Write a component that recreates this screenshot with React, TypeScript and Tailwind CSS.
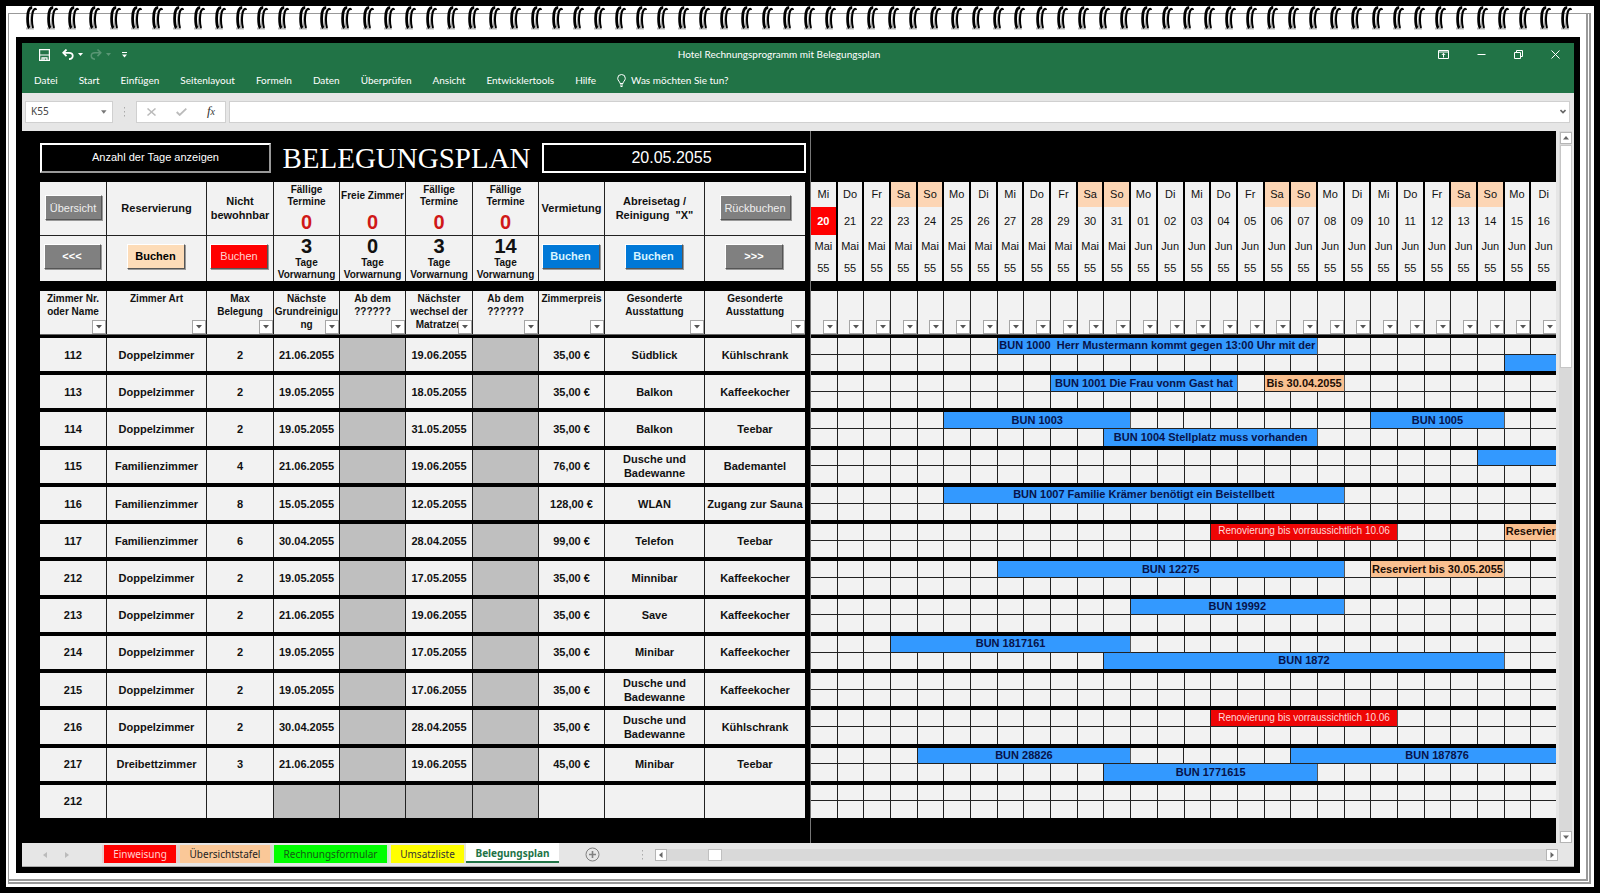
import React from "react";

const RINGS = Array.from({ length: 74 }, (_, i) => i);
const LEFT_COLS =
  "grid grid-cols-[minmax(0,67fr)_minmax(0,100fr)_minmax(0,67fr)_minmax(0,66fr)_minmax(0,66fr)_minmax(0,67fr)_minmax(0,66fr)_minmax(0,66fr)_minmax(0,100fr)_minmax(0,100fr)]";
const CAL_COLS = "grid grid-cols-[repeat(28,minmax(0,1fr))]";

const MENU = ["Datei", "Start", "Einfügen", "Seitenlayout", "Formeln", "Daten", "Überprüfen", "Ansicht", "Entwicklertools", "Hilfe"];

const WEEKDAYS = ["Mi", "Do", "Fr", "Sa", "So", "Mo", "Di"];

const DAYS = Array.from({ length: 28 }, (_, i) => {
  const inMay = i < 12;
  return {
    weekday: WEEKDAYS[i % 7],
    day: String(inMay ? 20 + i : i - 11).padStart(2, "0"),
    month: inMay ? "Mai" : "Jun",
    weekend: i % 7 === 3 || i % 7 === 4,
  };
});

type Kind = "blue" | "red" | "peach";
type Booking = { start: number; span: number; text: string; kind: Kind };
type Room = {
  nr: string;
  art: string;
  max: string;
  cleaning: string;
  mattress: string;
  price: string;
  extra1: string;
  extra2: string;
  top: Booking[];
  bottom: Booking[];
};

const b = (start: number, span: number, text: string, kind: Kind = "blue"): Booking => ({ start, span, text, kind });

const ROOMS: Room[] = [
  { nr: "112", art: "Doppelzimmer", max: "2", cleaning: "21.06.2055", mattress: "19.06.2055", price: "35,00 €", extra1: "Südblick", extra2: "Kühlschrank", top: [b(7, 12, "BUN 1000  Herr Mustermann kommt gegen 13:00 Uhr mit der")], bottom: [b(26, 2, "")] },
  { nr: "113", art: "Doppelzimmer", max: "2", cleaning: "19.05.2055", mattress: "18.05.2055", price: "35,00 €", extra1: "Balkon", extra2: "Kaffeekocher", top: [b(9, 7, "BUN 1001 Die Frau vonm Gast hat"), b(17, 3, "Bis 30.04.2055", "peach")], bottom: [] },
  { nr: "114", art: "Doppelzimmer", max: "2", cleaning: "19.05.2055", mattress: "31.05.2055", price: "35,00 €", extra1: "Balkon", extra2: "Teebar", top: [b(5, 7, "BUN 1003"), b(21, 5, "BUN 1005")], bottom: [b(11, 8, "BUN 1004 Stellplatz muss vorhanden")] },
  { nr: "115", art: "Familienzimmer", max: "4", cleaning: "21.06.2055", mattress: "19.06.2055", price: "76,00 €", extra1: "Dusche und Badewanne", extra2: "Bademantel", top: [b(25, 3, "")], bottom: [] },
  { nr: "116", art: "Familienzimmer", max: "8", cleaning: "15.05.2055", mattress: "12.05.2055", price: "128,00 €", extra1: "WLAN", extra2: "Zugang zur Sauna", top: [b(5, 15, "BUN 1007 Familie Krämer benötigt ein Beistellbett")], bottom: [] },
  { nr: "117", art: "Familienzimmer", max: "6", cleaning: "30.04.2055", mattress: "28.04.2055", price: "99,00 €", extra1: "Telefon", extra2: "Teebar", top: [b(15, 7, "Renovierung bis vorraussichtlich 10.06", "red"), b(26, 2, "Reservier", "peach")], bottom: [] },
  { nr: "212", art: "Doppelzimmer", max: "2", cleaning: "19.05.2055", mattress: "17.05.2055", price: "35,00 €", extra1: "Minnibar", extra2: "Kaffeekocher", top: [b(7, 13, "BUN 12275"), b(21, 5, "Reserviert bis 30.05.2055", "peach")], bottom: [] },
  { nr: "213", art: "Doppelzimmer", max: "2", cleaning: "21.06.2055", mattress: "19.06.2055", price: "35,00 €", extra1: "Save", extra2: "Kaffeekocher", top: [b(12, 8, "BUN 19992")], bottom: [] },
  { nr: "214", art: "Doppelzimmer", max: "2", cleaning: "19.05.2055", mattress: "17.05.2055", price: "35,00 €", extra1: "Minibar", extra2: "Kaffeekocher", top: [b(3, 9, "BUN 1817161")], bottom: [b(11, 15, "BUN 1872")] },
  { nr: "215", art: "Doppelzimmer", max: "2", cleaning: "19.05.2055", mattress: "17.06.2055", price: "35,00 €", extra1: "Dusche und Badewanne", extra2: "Kaffeekocher", top: [], bottom: [] },
  { nr: "216", art: "Doppelzimmer", max: "2", cleaning: "30.04.2055", mattress: "28.04.2055", price: "35,00 €", extra1: "Dusche und Badewanne", extra2: "Kühlschrank", top: [b(15, 7, "Renovierung bis vorraussichtlich 10.06", "red")], bottom: [] },
  { nr: "217", art: "Dreibettzimmer", max: "3", cleaning: "21.06.2055", mattress: "19.06.2055", price: "45,00 €", extra1: "Minibar", extra2: "Teebar", top: [b(4, 8, "BUN 28826"), b(18, 11, "BUN 187876")], bottom: [b(11, 8, "BUN 1771615")] },
  { nr: "212", art: "", max: "", cleaning: "", mattress: "", price: "", extra1: "", extra2: "", top: [], bottom: [] },
];

const FILTER_HEADERS = ["Zimmer Nr. oder Name", "Zimmer Art", "Max Belegung", "Nächste Grundreinigung", "Ab dem ??????", "Nächster wechsel der Matratzen", "Ab dem ??????", "Zimmerpreis", "Gesonderte Ausstattung", "Gesonderte Ausstattung"];

const KIND_CLASS: Record<Kind, string> = {
  blue: "bg-[#3399ff] font-bold text-[#07134a]",
  red: "bg-[#ee0505] text-[10px] text-[#ffd9d9]",
  peach: "bg-[#fac090] font-bold text-[#1a0d05]",
};

function FilterButton({ label }: { label: string }) {
  return (
    <button aria-label={label} className="absolute right-0 bottom-0 flex h-[14px] w-[14px] items-center justify-center border border-[#a6a6a6] bg-white">
      <svg width="6" height="4" viewBox="0 0 6 4"><path d="M0 0h6L3 3.6z" fill="#555" /></svg>
    </button>
  );
}

function Spiral() {
  return (
    <div aria-hidden="true" className="absolute inset-x-0 top-0 flex justify-between pr-[21px] pl-[19px]">
      {RINGS.map((i) => (
        <svg key={i} width="12" height="25" viewBox="0 0 12 25">
          <path d="M1 22.500h8" stroke="#b5b5b5" strokeWidth="2" />
          <path d="M8.500 3C6 8 5.200 14 5.600 21.500" fill="none" stroke="#aaa" strokeWidth="1.600" />
          <path d="M7.200 1.500C4 1.500 2.600 6.500 2.600 12.500c0 5 .3 8 1.700 9.500" fill="none" stroke="#000" strokeWidth="2.800" />
          <path d="M11.300 4C10.500 1.500 8.200 3 7.400 8c-.7 5-.5 10 .6 14" fill="none" stroke="#000" strokeWidth="2" />
        </svg>
      ))}
    </div>
  );
}

function TitleBar() {
  return (
    <header className="bg-[#217346] font-['Lato',sans-serif] text-white">
      <div className="grid h-[23px] grid-cols-[1fr_auto_1fr] items-center">
        <div className="flex items-center pl-[17px]">
          <button aria-label="Speichern">
            <svg width="11" height="12" viewBox="0 0 11 12" fill="none" stroke="#fff" strokeWidth="1.200"><path d="M.6.600h9.800v10.800H.600z M.6 6h9.800" /><path d="M3 11.400V8.800h5v2.600M5 9v2" /></svg>
          </button>
          <button aria-label="Rückgängig" className="ml-3 flex items-center gap-1">
            <svg width="12" height="11" viewBox="0 0 12 11" fill="none" stroke="#fff" strokeWidth="1.800"><path d="M4.500.5L1.200 3.800l3.300 3.300M1.500 3.800h5.500c5 0 5 6 0 6.400" /></svg>
            <svg width="5" height="3" viewBox="0 0 5 3"><path d="M0 0h5L2.500 3z" fill="#fff" /></svg>
          </button>
          <button aria-label="Wiederholen" className="ml-[7px] flex items-center gap-1 opacity-25">
            <svg width="12" height="11" viewBox="0 0 12 11" fill="none" stroke="#fff" strokeWidth="1.500"><path d="M7.500.5l3.300 3.300-3.300 3.300M10.500 3.800H5c-5 0-5 6 0 6.400" /></svg>
            <svg width="5" height="3" viewBox="0 0 5 3"><path d="M0 0h5L2.500 3z" fill="#fff" /></svg>
          </button>
          <button aria-label="Symbolleiste anpassen" className="ml-[11px]">
            <svg width="5" height="6" viewBox="0 0 5 6"><path d="M0 .5h5" stroke="#fff" /><path d="M0 2.500h5L2.500 5.500z" fill="#fff" /></svg>
          </button>
        </div>
        <h1 className="mr-[38px] text-[10px]">Hotel Rechnungsprogramm mit Belegungsplan</h1>
        <div className="flex items-center justify-end gap-[28px] pr-[14px]">
          <button aria-label="Menüband-Optionen"><svg width="11" height="9" viewBox="0 0 11 9" fill="none" stroke="#fff"><path d="M.5.500h10v8H.500zM.5 2h10M5.500 7.500V3.500M3.800 5L5.500 3.300 7.200 5" /></svg></button>
          <button aria-label="Minimieren"><svg width="9" height="9" viewBox="0 0 9 9"><path d="M.5 4.500h8" stroke="#fff" /></svg></button>
          <button aria-label="Verkleinern"><svg width="9" height="9" viewBox="0 0 9 9" fill="none" stroke="#fff"><path d="M.5 2.500h6v6h-6zM2.500 2.500v-2h6v6h-2" /></svg></button>
          <button aria-label="Schließen"><svg width="9" height="9" viewBox="0 0 9 9"><path d="M.5.500l8 8M8.500.500l-8 8" stroke="#fff" /></svg></button>
        </div>
      </div>
      <nav className="flex h-[27px] items-center gap-[21px] pt-[2px] pl-3 text-[10px]">
        {MENU.map((m) => (
          <a key={m} href="#">{m}</a>
        ))}
        <a href="#" className="flex items-center gap-[5px]">
          <svg width="9" height="13" viewBox="0 0 9 13" fill="none" stroke="#fff"><path d="M3 9.500C3 7.500.7 6.800.7 4.300a3.800 3.800 0 017.600 0C8.300 6.800 6 7.500 6 9.500zM3 11h3M3.500 12.500h2" /></svg>
          Was möchten Sie tun?
        </a>
      </nav>
    </header>
  );
}

function FormulaBar() {
  return (
    <div className="flex h-[38px] items-center bg-[#e6e6e6] pr-1 pb-px pl-[3px]">
      <div className="flex h-[22px] w-[88px] items-center border border-[#d0d0d0] bg-white pr-[5px]">
        <input aria-label="Namenfeld" defaultValue="K55" className="w-full min-w-0 bg-transparent pl-[5px] text-[10px] text-[#444] outline-none" />
        <svg width="6" height="4" viewBox="0 0 6 4"><path d="M0 0h6L3 4z" fill="#777" /></svg>
      </div>
      <svg className="mx-[10px]" width="3" height="10" viewBox="0 0 3 10" fill="#aaa"><path d="M1 0h1v1.500H1zM1 4h1v1.500H1zM1 8h1v1.500H1z" /></svg>
      <div className="flex h-[22px] w-[90px] items-center justify-between border border-[#d0d0d0] bg-white px-[10px]">
        <button aria-label="Abbrechen"><svg width="9" height="8" viewBox="0 0 9 8"><path d="M.5.500l8 7M8.500.500l-8 7" stroke="#bbb" strokeWidth="1.500" /></svg></button>
        <button aria-label="Eingeben"><svg width="11" height="8" viewBox="0 0 11 8" fill="none"><path d="M.7 4l3 3L10.300.700" stroke="#bbb" strokeWidth="1.800" /></svg></button>
        <button aria-label="Funktion einfügen" className="font-['Liberation_Serif',serif] text-[13px] leading-3 text-[#333] italic">f<span className="text-[10px]">x</span></button>
      </div>
      <div className="ml-[3px] flex h-[22px] flex-1 items-center border border-[#d0d0d0] bg-white pr-[3px]">
        <input aria-label="Bearbeitungsleiste" className="h-full min-w-0 flex-1 outline-none" />
        <svg width="6" height="5" viewBox="0 0 6 5" fill="none"><path d="M.5 1L3 3.500 5.500 1" stroke="#666" strokeWidth="1.600" /></svg>
      </div>
    </div>
  );
}

function MacroButton({ children, className }: { children: string; className: string }) {
  return (
    <button className={"flex h-[25px] items-center justify-center border border-t-white border-r-[#555] border-b-[#555] border-l-white text-[11px] leading-3 shadow-[1px_1px_0_#999] " + className}>
      {children}
    </button>
  );
}

function DueCell({ title, count, warn }: { title: string; count: string; warn: string }) {
  return (
    <div className="flex flex-col border-r border-[#222] text-center text-[10px] leading-3 font-bold">
      <div className="flex h-[54px] flex-col items-center justify-between border-b border-[#222] pt-[2px]">
        <div className="flex h-[24px] w-full items-center justify-center">{title}</div>
        <div className="pb-px text-[20px] leading-6 text-[#d01818]">{count}</div>
      </div>
      <div className="flex h-[45px] flex-col items-center">
        <div className="text-[20px] leading-[21px]">{warn}</div>
        <div>Tage Vorwarnung</div>
      </div>
    </div>
  );
}

function ActionCell({ label, last, children }: { label: React.ReactNode; last?: boolean; children: React.ReactNode }) {
  return (
    <div className={"flex flex-col text-center font-bold " + (last ? "" : "border-r border-[#222]")}>
      <div className="flex h-[54px] items-center justify-center border-b border-[#222] pb-[2px] leading-[14px]">{label}</div>
      <div className="flex h-[45px] items-center justify-center pr-[2px] pb-[5px]">{children}</div>
    </div>
  );
}

function LeftPane() {
  return (
    <section className="flex w-[789px] shrink-0 flex-col border-r border-[#777] pl-[18px]">
      <div className="flex h-[51px] items-center pt-[2px] pr-1 text-white">
        <button className="h-[30px] w-[231px] border-2 border-t-white border-r-[#999] border-b-[#999] border-l-white text-[11px]">Anzahl der Tage anzeigen</button>
        <h2 className="flex-1 text-center font-['Liberation_Serif',serif] text-[29px] leading-8">BELEGUNGSPLAN</h2>
        <div className="flex h-[30px] w-[264px] items-center justify-center border-2 border-white pr-[5px] text-[16px]">20.05.2055</div>
      </div>
      <div className="flex flex-1 flex-col pr-[5px]">
        <div className={LEFT_COLS + " h-[99px] shrink-0 bg-[#f2f2f2]"}>
          <ActionCell label={<MacroButton className="w-[57px] bg-[#808080] font-normal text-[#eee]">Übersicht</MacroButton>}>
            <MacroButton className="w-[57px] bg-[#808080] text-white">{"<<<"}</MacroButton>
          </ActionCell>
          <ActionCell label="Reservierung"><MacroButton className="w-[58px] bg-[#fddcb8] text-black">Buchen</MacroButton></ActionCell>
          <ActionCell label="Nicht bewohnbar"><MacroButton className="w-[58px] bg-[#ff0000] font-normal text-[#ffd0d0]">Buchen</MacroButton></ActionCell>
          <DueCell title="Fällige Termine" count="0" warn="3" />
          <DueCell title="Freie Zimmer" count="0" warn="0" />
          <DueCell title="Fällige Termine" count="0" warn="3" />
          <DueCell title="Fällige Termine" count="0" warn="14" />
          <ActionCell label="Vermietung"><MacroButton className="w-[58px] bg-[#0078d7] text-[#d8f4ff]">Buchen</MacroButton></ActionCell>
          <ActionCell label={<span className="whitespace-pre">{'Abreisetag /\nReinigung  "X"'}</span>}><MacroButton className="w-[58px] bg-[#0078d7] text-[#d8f4ff]">Buchen</MacroButton></ActionCell>
          <ActionCell last label={<MacroButton className="w-[71px] bg-[#808080] font-normal text-[#eee]">Rückbuchen</MacroButton>}>
            <MacroButton className="w-[58px] bg-[#808080] text-white">{">>>"}</MacroButton>
          </ActionCell>
        </div>
        <table className="mt-[10px] flex flex-1 flex-col">
          <thead className="mb-[3px] block border-b border-[#666]">
            <tr className={LEFT_COLS + " h-[43px] bg-[#f2f2f2]"}>
              {FILTER_HEADERS.map((h, i) => (
                <th key={i} className={"relative pt-px text-center text-[10px] leading-[13px] font-bold break-words " + (i < 9 ? "border-r border-[#222]" : "")}>
                  {h}
                  <FilterButton label={"Filter " + h} />
                </th>
              ))}
            </tr>
          </thead>
          <tbody className="flex flex-1 flex-col font-bold">
            {ROOMS.map((r, i) => {
              const cells = [r.nr, r.art, r.max, r.cleaning, null, r.mattress, null, r.price, r.extra1, r.extra2];
              return (
                <tr key={i} className={LEFT_COLS + " min-h-[37px] flex-1 border-b-[4px] border-black"}>
                  {cells.map((c, j) => {
                    const grey = c === null || (r.art === "" && (j === 3 || j === 5));
                    return (
                      <td key={j} className={"flex items-center justify-center text-center leading-[14px] " + (j < 9 ? "border-r border-[#222] " : "") + (grey ? "bg-[#bfbfbf]" : "bg-[#f2f2f2]")}>
                        {c}
                      </td>
                    );
                  })}
                </tr>
              );
            })}
          </tbody>
        </table>
      </div>
      <div className="h-[21px] shrink-0" />
    </section>
  );
}

function HalfRow({ bookings, first }: { bookings: Booking[]; first: boolean }) {
  const cells: React.ReactNode[] = [];
  for (let day = 0; day < 28; day++) {
    const hit = bookings.find((x) => x.start === day);
    const line = first ? "border-b border-b-[#222] " : "";
    if (hit) {
      const span = Math.min(hit.span, 28 - day);
      const cut = hit.span > span ? "pl-[26px] " : "";
      cells.push(
        <td key={day} colSpan={span} style={{ gridColumn: `span ${span}` }} className={line + cut + "flex items-center justify-center overflow-hidden border-r border-r-[#555] pb-px leading-3 whitespace-pre " + KIND_CLASS[hit.kind]}>
          {hit.text}
        </td>,
      );
      day += span - 1;
    } else {
      cells.push(<td key={day} className={line + "border-r border-r-[#222] bg-[#f2f2f2]"} />);
    }
  }
  return <tr className={CAL_COLS + " flex-1"}>{cells}</tr>;
}

function CalendarPane() {
  return (
    <section className="min-w-0 flex-1 overflow-hidden">
      <div className="-mr-[2px] flex h-full flex-col pt-[51px]">
        <div className={CAL_COLS + " h-[99px] shrink-0 bg-[#f2f2f2] text-center"}>
          {DAYS.map((d, i) => (
            <div key={i} className="flex flex-col border-r-2 border-black">
              <div className={"flex h-[25px] items-center justify-center " + (d.weekend ? "bg-[#fcd5b4]" : "")}>{d.weekday}</div>
              <div className={"flex h-[28px] items-center justify-center " + (i === 0 ? "bg-[#ff0000] font-bold text-white" : "")}>{d.day}</div>
              <div className="flex h-[22px] items-center justify-center">{d.month}</div>
              <div className="flex h-[23px] items-center justify-center">55</div>
            </div>
          ))}
        </div>
        <table className="mt-[10px] flex flex-1 flex-col">
          <thead className="mb-[3px] block border-b border-[#666]">
            <tr className={CAL_COLS + " h-[43px] bg-[#f2f2f2]"}>
              {DAYS.map((d, i) => (
                <th key={i} className="relative border-r border-[#222]"><FilterButton label={`Filter ${d.day}. ${d.month}`} /></th>
              ))}
            </tr>
          </thead>
          {ROOMS.map((r, i) => (
            <tbody key={i} className="flex min-h-[37px] flex-1 flex-col border-b-[4px] border-black">
              <HalfRow bookings={r.top} first />
              <HalfRow bookings={r.bottom} first={false} />
            </tbody>
          ))}
        </table>
        <div className="h-[21px] shrink-0" />
      </div>
    </section>
  );
}

function ScrollArrow({ label, d }: { label: string; d: string }) {
  return (
    <button aria-label={label} className="flex h-[12px] w-[12px] shrink-0 items-center justify-center border border-[#b5b5b5] bg-white">
      <svg width="6" height="6" viewBox="0 0 6 6"><path d={d} fill="#666" /></svg>
    </button>
  );
}

function SheetTabs() {
  return (
    <footer className="flex h-[24px] items-center border-b border-[#aaa] bg-[#e6e6e6]">
      <div className="flex w-[80px] gap-[18px] pl-[21px]">
        <svg width="4" height="6" viewBox="0 0 4 6"><path d="M4 0v6L0 3z" fill="#bbb" /></svg>
        <svg width="4" height="6" viewBox="0 0 4 6"><path d="M0 0v6l4-3z" fill="#bbb" /></svg>
      </div>
      <nav className="flex items-stretch self-stretch text-[10px] leading-[18px]">
        <a href="#" className="mt-[2px] mb-[3px] flex w-[76px] items-center justify-center border-x-2 border-[#e6d0d0] bg-[#ff0000] text-[#ffd0d0]">Einweisung</a>
        <a href="#" className="mt-[2px] mb-[3px] flex w-[94px] items-center justify-center border-x-2 border-[#e0d4cc] bg-[#fac898] text-[#222]">Übersichtstafel</a>
        <a href="#" className="mt-[2px] mb-[3px] flex w-[117px] items-center justify-center border-x-2 border-[#d0e6d0] bg-[#00ff00] text-[#145a14]">Rechnungsformular</a>
        <a href="#" className="mt-[2px] mb-[3px] flex w-[77px] items-center justify-center border-x-2 border-[#e6e6d0] bg-[#ffff00] text-[#333]">Umsatzliste</a>
        <a href="#" aria-current="page" className="mb-[3px] flex w-[93px] items-center justify-center border-b-2 border-[#217346] bg-white pt-[2px] font-bold text-[#217346]">Belegungsplan</a>
      </nav>
      <button aria-label="Neues Blatt" className="ml-[26px]">
        <svg width="15" height="15" viewBox="0 0 15 15" fill="none" stroke="#808080"><circle cx="7.500" cy="7.500" r="6.500" /><path d="M7.500 4v7M4 7.500h7" strokeWidth="1.600" /></svg>
      </button>
      <svg className="ml-[41px]" width="3" height="10" viewBox="0 0 3 10" fill="#aaa"><path d="M1 0h1v1.500H1zM1 4h1v1.500H1zM1 8h1v1.500H1z" /></svg>
      <div className="mr-4 ml-[11px] flex h-[12px] flex-1 items-center bg-[#d9d9d9]">
        <ScrollArrow label="Nach links" d="M4.500 0v6L1 3z" />
        <div className="ml-[41px] h-[12px] w-[14px] border border-[#c0c0c0] bg-white" />
        <div className="flex-1" />
        <ScrollArrow label="Nach rechts" d="M1.500 0v6L5 3z" />
      </div>
    </footer>
  );
}

export default function App() {
  return (
    <div className="flex min-h-screen flex-col bg-black p-[6px] font-['Liberation_Sans',Arial,sans-serif] text-[11px] text-[#111]">
      <div className="relative flex flex-1 flex-col bg-white pt-[7px] pr-[3px] pb-[3px] pl-[2px]">
        <div className="flex flex-1 flex-col border-t border-r-[5px] border-b-[5px] border-l border-t-[#999] border-r-[#999] border-b-[#999] border-l-[#999] [border-bottom-style:double] [border-right-style:double]">
          <div className="mt-[23px] mr-[6px] mb-[6px] ml-[7px] flex flex-1 flex-col border-[6px] border-black">
            <div className="flex flex-1 flex-col font-['Noto_Sans',sans-serif]">
              <TitleBar />
              <FormulaBar />
              <div className="flex flex-1 bg-[#e6e6e6] font-['Liberation_Sans',Arial,sans-serif]">
                <main className="flex min-w-0 flex-1 bg-black">
                  <LeftPane />
                  <CalendarPane />
                </main>
                <div className="mr-[2px] ml-[3px] flex w-[13px] flex-col items-center bg-[#d9d9d9] pt-px">
                  <ScrollArrow label="Nach oben" d="M0 4.500h6L3 1z" />
                  <div className="mt-px h-[223px] w-[12px] border border-[#c6c6c6] bg-white" />
                  <div className="flex-1" />
                  <ScrollArrow label="Nach unten" d="M0 1.500h6L3 5z" />
                </div>
              </div>
              <SheetTabs />
            </div>
          </div>
        </div>
        <Spiral />
      </div>
    </div>
  );
}
